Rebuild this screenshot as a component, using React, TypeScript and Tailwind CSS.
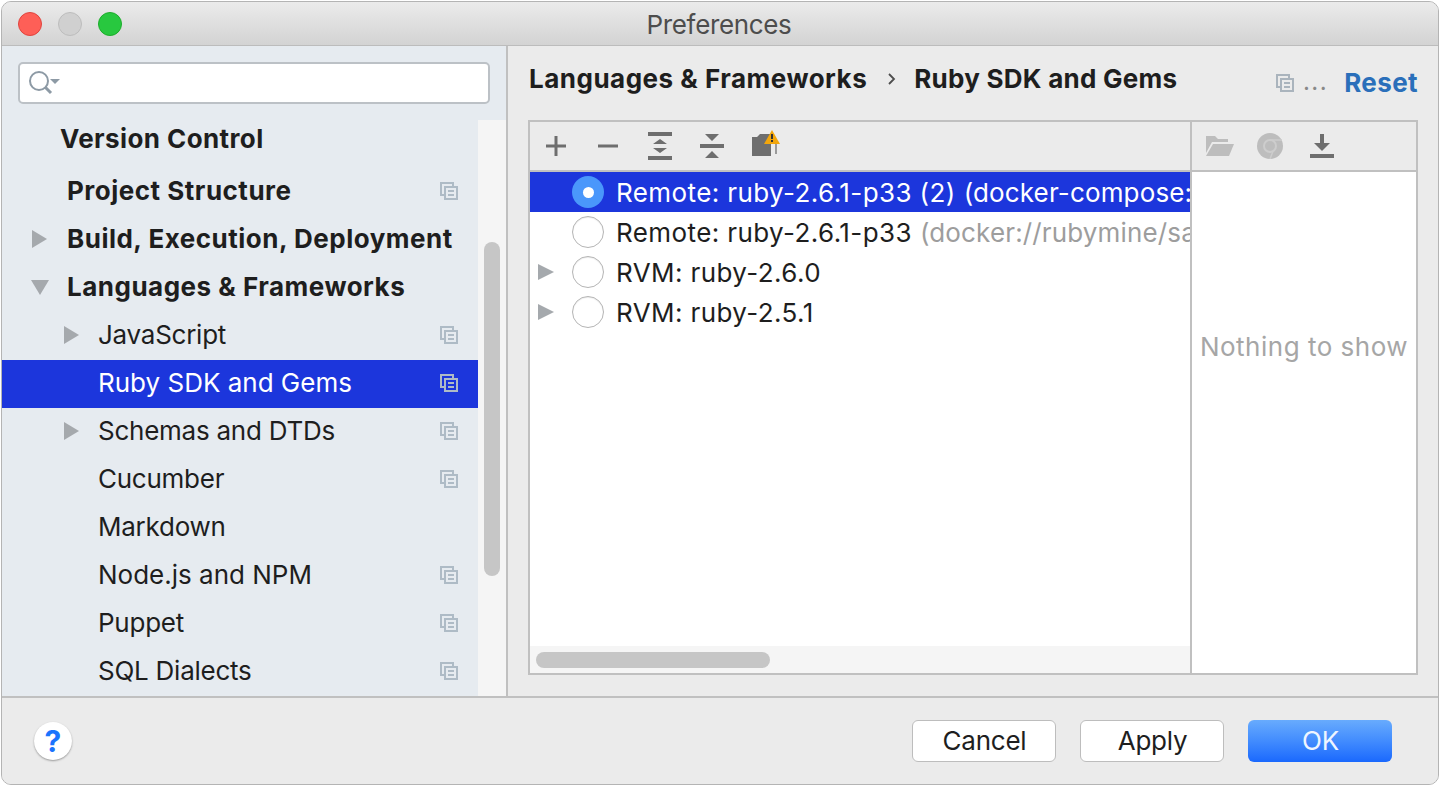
import React from "react";

const CopyIcon = ({ className = "text-[#aebbc6]" }: { className?: string }) => (
  <svg width="18" height="18" viewBox="0 0 18 18" fill="none" stroke="currentColor" strokeWidth="2" className={className}>
    <path d="M13 4V1H1v12h3" />
    <rect x="5" y="5" width="12" height="12" />
    <path d="M8 9h6M8 13h6" />
  </svg>
);

const Arrow = ({ down = false }: { down?: boolean }) => (
  <svg width="18" height="18" viewBox="0 0 18 18" className="fill-[#a5a9ad]">
    {down ? <path d="M0 2h18L9 17z" /> : <path d="M1 0l15 9-15 9z" />}
  </svg>
);

const SideRow = ({
  label,
  bold,
  wide,
  arrow,
  indent,
  copy = true,
  selected,
}: {
  label: string;
  bold?: boolean;
  wide?: boolean;
  arrow?: "right" | "down";
  indent?: boolean;
  copy?: boolean;
  selected?: boolean;
}) => (
  <div className={`flex h-12 shrink-0 items-center pb-[2px] pr-[20px] ${selected ? "bg-[#1c36dc] text-white" : "text-[#1e1e1e]"}`}>
    <div className={`flex shrink-0 items-center ${indent ? "w-[97px] pl-[61px]" : "w-[65px] pl-[29px]"}`}>
      {arrow && <Arrow down={arrow === "down"} />}
    </div>
    <span
      className={`flex-1 text-[26px] leading-none ${
        bold ? "font-bold tracking-[0.5px]" : wide ? "-ml-[1px] tracking-[0px]" : "-ml-[1px] tracking-[-0.25px]"
      }`}
    >
      {label}
    </span>
    {copy && <CopyIcon />}
  </div>
);

const Radio = ({ on }: { on?: boolean }) =>
  on ? (
    <div className="flex h-8 w-8 shrink-0 items-center justify-center rounded-full bg-[#4a97fb]">
      <div className="h-[11px] w-[11px] rounded-full bg-white" />
    </div>
  ) : (
    <div className="h-8 w-8 shrink-0 rounded-full border border-[#b5b5b5] bg-white shadow-[inset_0_1px_1px_rgba(0,0,0,0.08)]" />
  );

const SdkRow = ({
  label,
  dim,
  arrow,
  on,
}: {
  label: string;
  dim?: string;
  arrow?: boolean;
  on?: boolean;
}) => (
  <div className={`flex h-10 shrink-0 items-center overflow-hidden whitespace-nowrap ${on ? "bg-[#1c36dc] text-white" : "text-[#1e1e1e]"}`}>
    <div className="flex w-[42px] shrink-0 justify-start pl-[8px]">
      {arrow && (
        <svg width="16" height="18" viewBox="0 0 16 18" className="fill-[#a5a9ad]">
          <path d="M0 1l16 8-16 8z" />
        </svg>
      )}
    </div>
    <Radio on={on} />
    <span className="ml-[12px] pt-[2px] text-[26px] leading-none tracking-[0.4px]">
      {label}
      {dim && <span className={`ml-[8px] tracking-[0.15px] ${on ? "text-white" : "text-[#9d9d9d]"}`}>{dim}</span>}
    </span>
  </div>
);

const Btn = ({ label, primary }: { label: string; primary?: boolean }) => (
  <button
    className={`h-[42px] w-36 rounded-[6px] pl-[1px] text-[26px] leading-none tracking-[-0.25px] ${
      primary
        ? "bg-gradient-to-b from-[#68abfd] to-[#1a68fd] text-[#eef5ff]"
        : "border border-[#bdbdbd] bg-white text-[#1e1e1e]"
    }`}
  >
    {label}
  </button>
);

const App = () => {
  return (
    <div className="h-[786px] w-[1440px] overflow-hidden bg-white p-[1px] font-['Inter',sans-serif]">
      <div className="flex h-full flex-col overflow-hidden rounded-[10px] border border-[#b4b4b4] bg-[#ebebeb]">
        {/* title bar */}
        <div className="relative flex h-[44px] shrink-0 items-center justify-center border-b border-[#bcbcbc] bg-gradient-to-b from-[#ebebeb] to-[#d3d3d3] pr-[2px] pt-[2px]">
          <div className="absolute left-[16px] top-[10px] flex gap-[16px]">
            <div className="h-6 w-6 rounded-full border border-[#e0443e] bg-[#fe5f57]" />
            <div className="h-6 w-6 rounded-full border border-[#bdbdbd] bg-[#d0d0d0]" />
            <div className="h-6 w-6 rounded-full border border-[#1dad2b] bg-[#28c83f]" />
          </div>
          <span className="text-[26px] leading-none tracking-[-0.35px] text-[#4d4d4d]">Preferences</span>
        </div>

        <div className="flex min-h-0 flex-1">
          {/* sidebar */}
          <div className="flex w-[506px] shrink-0 flex-col overflow-hidden border-r-2 border-[#c0c0c0] bg-[#e6ebf0]">
            <div className="h-[74px] shrink-0 px-4 pt-4">
              <div className="flex h-[42px] w-[472px] items-center rounded-[5px] border-2 border-[#bcc1c6] bg-white pl-[8px]">
                <svg width="32" height="26" viewBox="0 0 32 26" fill="none">
                  <circle cx="11" cy="11" r="9" stroke="#8d9aa5" strokeWidth="2" />
                  <path d="M17 17l6 6" stroke="#8d9aa5" strokeWidth="3" />
                  <path d="M22 9h10l-5 5z" fill="#8d9aa5" />
                </svg>
              </div>
            </div>
            <div className="flex min-h-0 flex-1">
              <div className="flex w-[476px] shrink-0 flex-col">
                <div className="flex h-[38px] shrink-0 items-center pl-[58px] text-[26px] font-bold leading-none tracking-[0.4px] text-[#1e1e1e]">
                  Version Control
                </div>
                <div className="h-[10px] shrink-0" />
                <SideRow label="Project Structure" bold />
                <SideRow label="Build, Execution, Deployment" bold arrow="right" copy={false} />
                <SideRow label="Languages & Frameworks" bold arrow="down" copy={false} />
                <SideRow label="JavaScript" indent arrow="right" />
                <SideRow label="Ruby SDK and Gems" indent wide selected />
                <SideRow label="Schemas and DTDs" indent arrow="right" />
                <SideRow label="Cucumber" indent />
                <SideRow label="Markdown" indent copy={false} />
                <SideRow label="Node.js and NPM" indent wide />
                <SideRow label="Puppet" indent />
                <SideRow label="SQL Dialects" indent />
              </div>
              <div className="flex-1 bg-[#f5f5f5] pl-[6px] pt-[122px]">
                <div className="h-[334px] w-4 rounded-full bg-[#c6c6c6]" />
              </div>
            </div>
          </div>

          {/* content */}
          <div className="flex min-w-0 flex-1 flex-col pl-[20px] pr-[20px]">
            <div className="flex h-[74px] shrink-0 items-center pb-[8px]">
              <span className="ml-[1px] text-[26px] font-bold leading-none tracking-[0.5px] text-[#1e1e1e]">Languages &amp; Frameworks</span>
              <svg width="10" height="14" viewBox="0 0 10 14" fill="none" stroke="#4d4d4d" strokeWidth="1.800" className="ml-[20px]">
                <path d="M2 2l5 5-5 5" />
              </svg>
              <span className="ml-[17px] flex-1 text-[26px] font-bold leading-none tracking-[0.25px] text-[#1e1e1e]">Ruby SDK and Gems</span>
              <CopyIcon className="mt-2 text-[#aab4bd]" />
              <span className="ml-[9px] mt-[6px] text-[24px] leading-none tracking-[1.5px] text-[#888888]">...</span>
              <span className="ml-[16px] mt-2 text-[26px] font-bold leading-none tracking-[0.4px] text-[#2a6fba]">Reset</span>
            </div>

            <div className="flex h-[555px] shrink-0 border-2 border-[#c0c0c0]">
              {/* sdk list */}
              <div className="flex w-[660px] shrink-0 flex-col">
                <div className="flex h-[50px] shrink-0 items-center border-b-2 border-[#c0c0c0] bg-[#ebebeb] pl-[16px]">
                  <svg width="20" height="20" viewBox="0 0 20 20" className="fill-[#6e6e6e]">
                    <path d="M8.500 0h3v8.500H20v3h-8.500V20h-3v-8.500H0v-3h8.500z" />
                  </svg>
                  <svg width="20" height="20" viewBox="0 0 20 20" className="ml-[32px] fill-[#6e6e6e]">
                    <path d="M0 8.500h20v3H0z" />
                  </svg>
                  <svg width="24" height="28" viewBox="0 0 24 28" className="ml-[30px] fill-[#6e6e6e]">
                    <path d="M0 0h24v4H0zM0 24h24v4H0zM12 7l7 5H5zM12 21l-7-5h14z" />
                  </svg>
                  <svg width="24" height="24" viewBox="0 0 24 24" className="ml-[28px] fill-[#6e6e6e]">
                    <path d="M0 10h24v4H0zM5 0h14l-7 7zM12 17l7 7H5z" />
                  </svg>
                  <svg width="28" height="26" viewBox="0 0 28 26" className="mb-[6px] ml-[28px]">
                    <path d="M0 7h5l3-3h11v22H0z" fill="#6e6e6e" />
                    <path d="M23 10h2v14h-2z" fill="#9a9a9a" />
                    <path d="M20 0l8 14H12z" fill="#f2a60c" />
                    <path d="M19 4h2v5h-2zM19 10h2v2h-2z" fill="#333" />
                  </svg>
                </div>
                <div className="flex min-h-0 flex-1 flex-col bg-white">
                  <SdkRow label="Remote: ruby-2.6.1-p33 (2)" dim="(docker-compose://rubymine/sample" on />
                  <SdkRow label="Remote: ruby-2.6.1-p33" dim="(docker://rubymine/sample_rails_app" />
                  <SdkRow label="RVM: ruby-2.6.0" arrow />
                  <SdkRow label="RVM: ruby-2.5.1" arrow />
                  <div className="flex-1" />
                  <div className="flex h-[27px] shrink-0 items-center bg-[#f5f5f5] pl-[6px]">
                    <div className="h-4 w-[234px] rounded-full bg-[#c6c6c6]" />
                  </div>
                </div>
              </div>

              {/* gems */}
              <div className="flex min-w-0 flex-1 flex-col border-l-2 border-[#c0c0c0]">
                <div className="flex h-[50px] shrink-0 items-center border-b-2 border-[#c0c0c0] bg-[#ebebeb] pl-[14px]">
                  <svg width="28" height="20" viewBox="0 0 28 20">
                    <path d="M0 0h9l3 3h10v3H6L0 17z" fill="#bdbdbd" />
                    <path d="M7 8h21l-5 12H0z" fill="#bdbdbd" />
                  </svg>
                  <svg width="26" height="26" viewBox="0 0 26 26" className="ml-[23px]">
                    <circle cx="13" cy="13" r="13" fill="#bdbdbd" />
                    <path d="M13 7h12M18 13l-5 13" stroke="#cdcdcd" strokeWidth="1.500" fill="none" />
                    <circle cx="13" cy="13" r="6" fill="#bdbdbd" stroke="#cdcdcd" strokeWidth="2" />
                  </svg>
                  <svg width="24" height="24" viewBox="0 0 24 24" className="ml-[27px] fill-[#6e6e6e]">
                    <path d="M10 0h4v9h6l-8 8-8-8h6zM0 20h24v4H0z" />
                  </svg>
                </div>
                <div className="flex flex-1 items-start justify-center bg-white pt-[162px]">
                  <span className="whitespace-nowrap text-[26px] leading-none tracking-[0.5px] text-[#a6a6a6]">Nothing to show</span>
                </div>
              </div>
            </div>
          </div>
        </div>

        {/* footer */}
        <div className="flex h-[88px] shrink-0 items-center border-t-2 border-[#c0c0c0] bg-[#ebebeb] pl-[32px] pr-[46px]">
          <div className="flex h-[38px] w-[38px] items-center justify-center rounded-full bg-white text-[30px] font-bold leading-none text-[#1a74fd] shadow-[0_1px_2px_rgba(0,0,0,0.35)]">
            ?
          </div>
          <div className="flex-1" />
          <div className="flex gap-6">
            <Btn label="Cancel" />
            <Btn label="Apply" />
            <Btn label="OK" primary />
          </div>
        </div>
      </div>
    </div>
  );
};

export default App;
